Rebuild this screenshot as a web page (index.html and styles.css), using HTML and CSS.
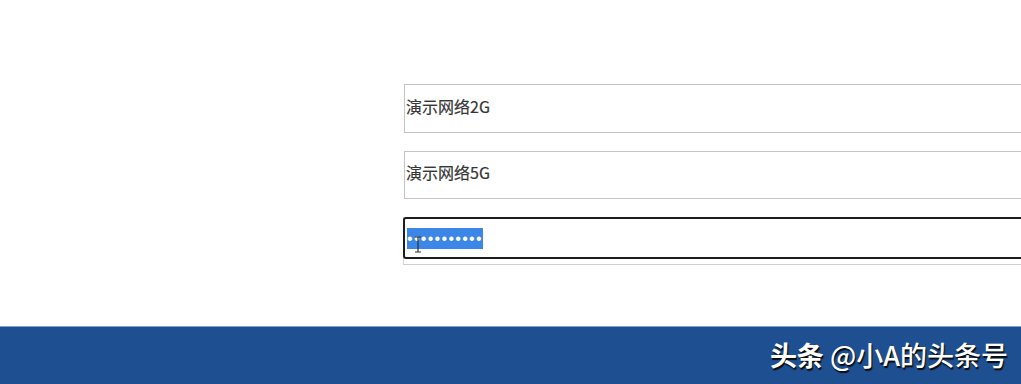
FILE: index.html
```html
<!DOCTYPE html>
<html lang="zh">
<head>
<meta charset="utf-8">
<link rel="stylesheet" href="styles.css">
</head>
<body>
<div class="page">
  <main class="content">
    <div class="form">
      <div class="field"><span class="value">演示网络2G</span></div>
      <div class="field second"><span class="value">演示网络5G</span></div>
      <div class="field-wrap">
        <div class="focus">
          <span class="selection">•••••••••••</span>
          <svg class="ibeam" width="8" height="17" viewBox="0 0 8 17">
            <path d="M1 1 H7 M4 1 V16 M1 16 H7" stroke="#333" stroke-width="1.2" fill="none"/>
          </svg>
        </div>
      </div>
    </div>
  </main>
  <footer class="footer">
    <span class="brand"><b>头条</b> @小A的头条号</span>
  </footer>
</div>
</body>
</html>
```

FILE: styles.css
```css
html, body {
  margin: 0;
  padding: 0;
  background: #ffffff;
}
.page {
  width: 1021px;
  height: 384px;
  display: flex;
  flex-direction: column;
  overflow: hidden;
}
.content {
  height: 326px;
  padding-top: 84px;
  padding-left: 404px;
  box-sizing: border-box;
}
.form {
  display: flex;
  flex-direction: column;
  width: 640px;
}
.field {
  height: 49px;
  box-sizing: border-box;
  border: 1px solid #c4c4c4;
  display: flex;
  align-items: center;
  padding-left: 1px;
  padding-bottom: 6px;
  font-family: "Noto Sans CJK SC", "Noto Sans", sans-serif;
  font-size: 16px;
  color: #363636;
  -webkit-text-stroke: 0.2px #363636;
}
.field.second {
  margin-top: 18px;
  height: 48px;
}
.field-wrap {
  margin-top: 18px;
  margin-left: -1px;
  height: 48px;
  box-sizing: border-box;
  border-bottom: 1px solid #cfcfcf;
  border-left: 1px solid #d6d6d6;
}
.focus {
  position: relative;
  height: 42px;
  box-sizing: border-box;
  border: 2px solid #1c1c1c;
  border-radius: 3px;
  margin-left: -1px;
  display: flex;
  align-items: center;
  padding-left: 2px;
}
.selection {
  background: #3b86e6;
  color: #ffffff;
  font-family: "Liberation Sans", sans-serif;
  font-size: 16px;
  letter-spacing: 1.3px;
  line-height: 21px;
  height: 21px;
  margin-top: 1px;
}
.ibeam {
  position: absolute;
  left: 9px;
  top: 17px;
}
.footer {
  height: 58px;
  box-sizing: border-box;
  background: #1e4f91;
  border-top: 1px solid #7ea2cf;
  display: flex;
  align-items: center;
  justify-content: flex-end;
  padding-right: 13px;
  padding-bottom: 2px;
}
.brand {
  font-family: "Noto Sans CJK SC", "Noto Sans", sans-serif;
  font-size: 27px;
  color: #ffffff;
  text-shadow: 1px 2px 1px #0a0a0a;
  font-weight: 500;
  white-space: nowrap;
}
.brand b {
  font-weight: 700;
}
```
